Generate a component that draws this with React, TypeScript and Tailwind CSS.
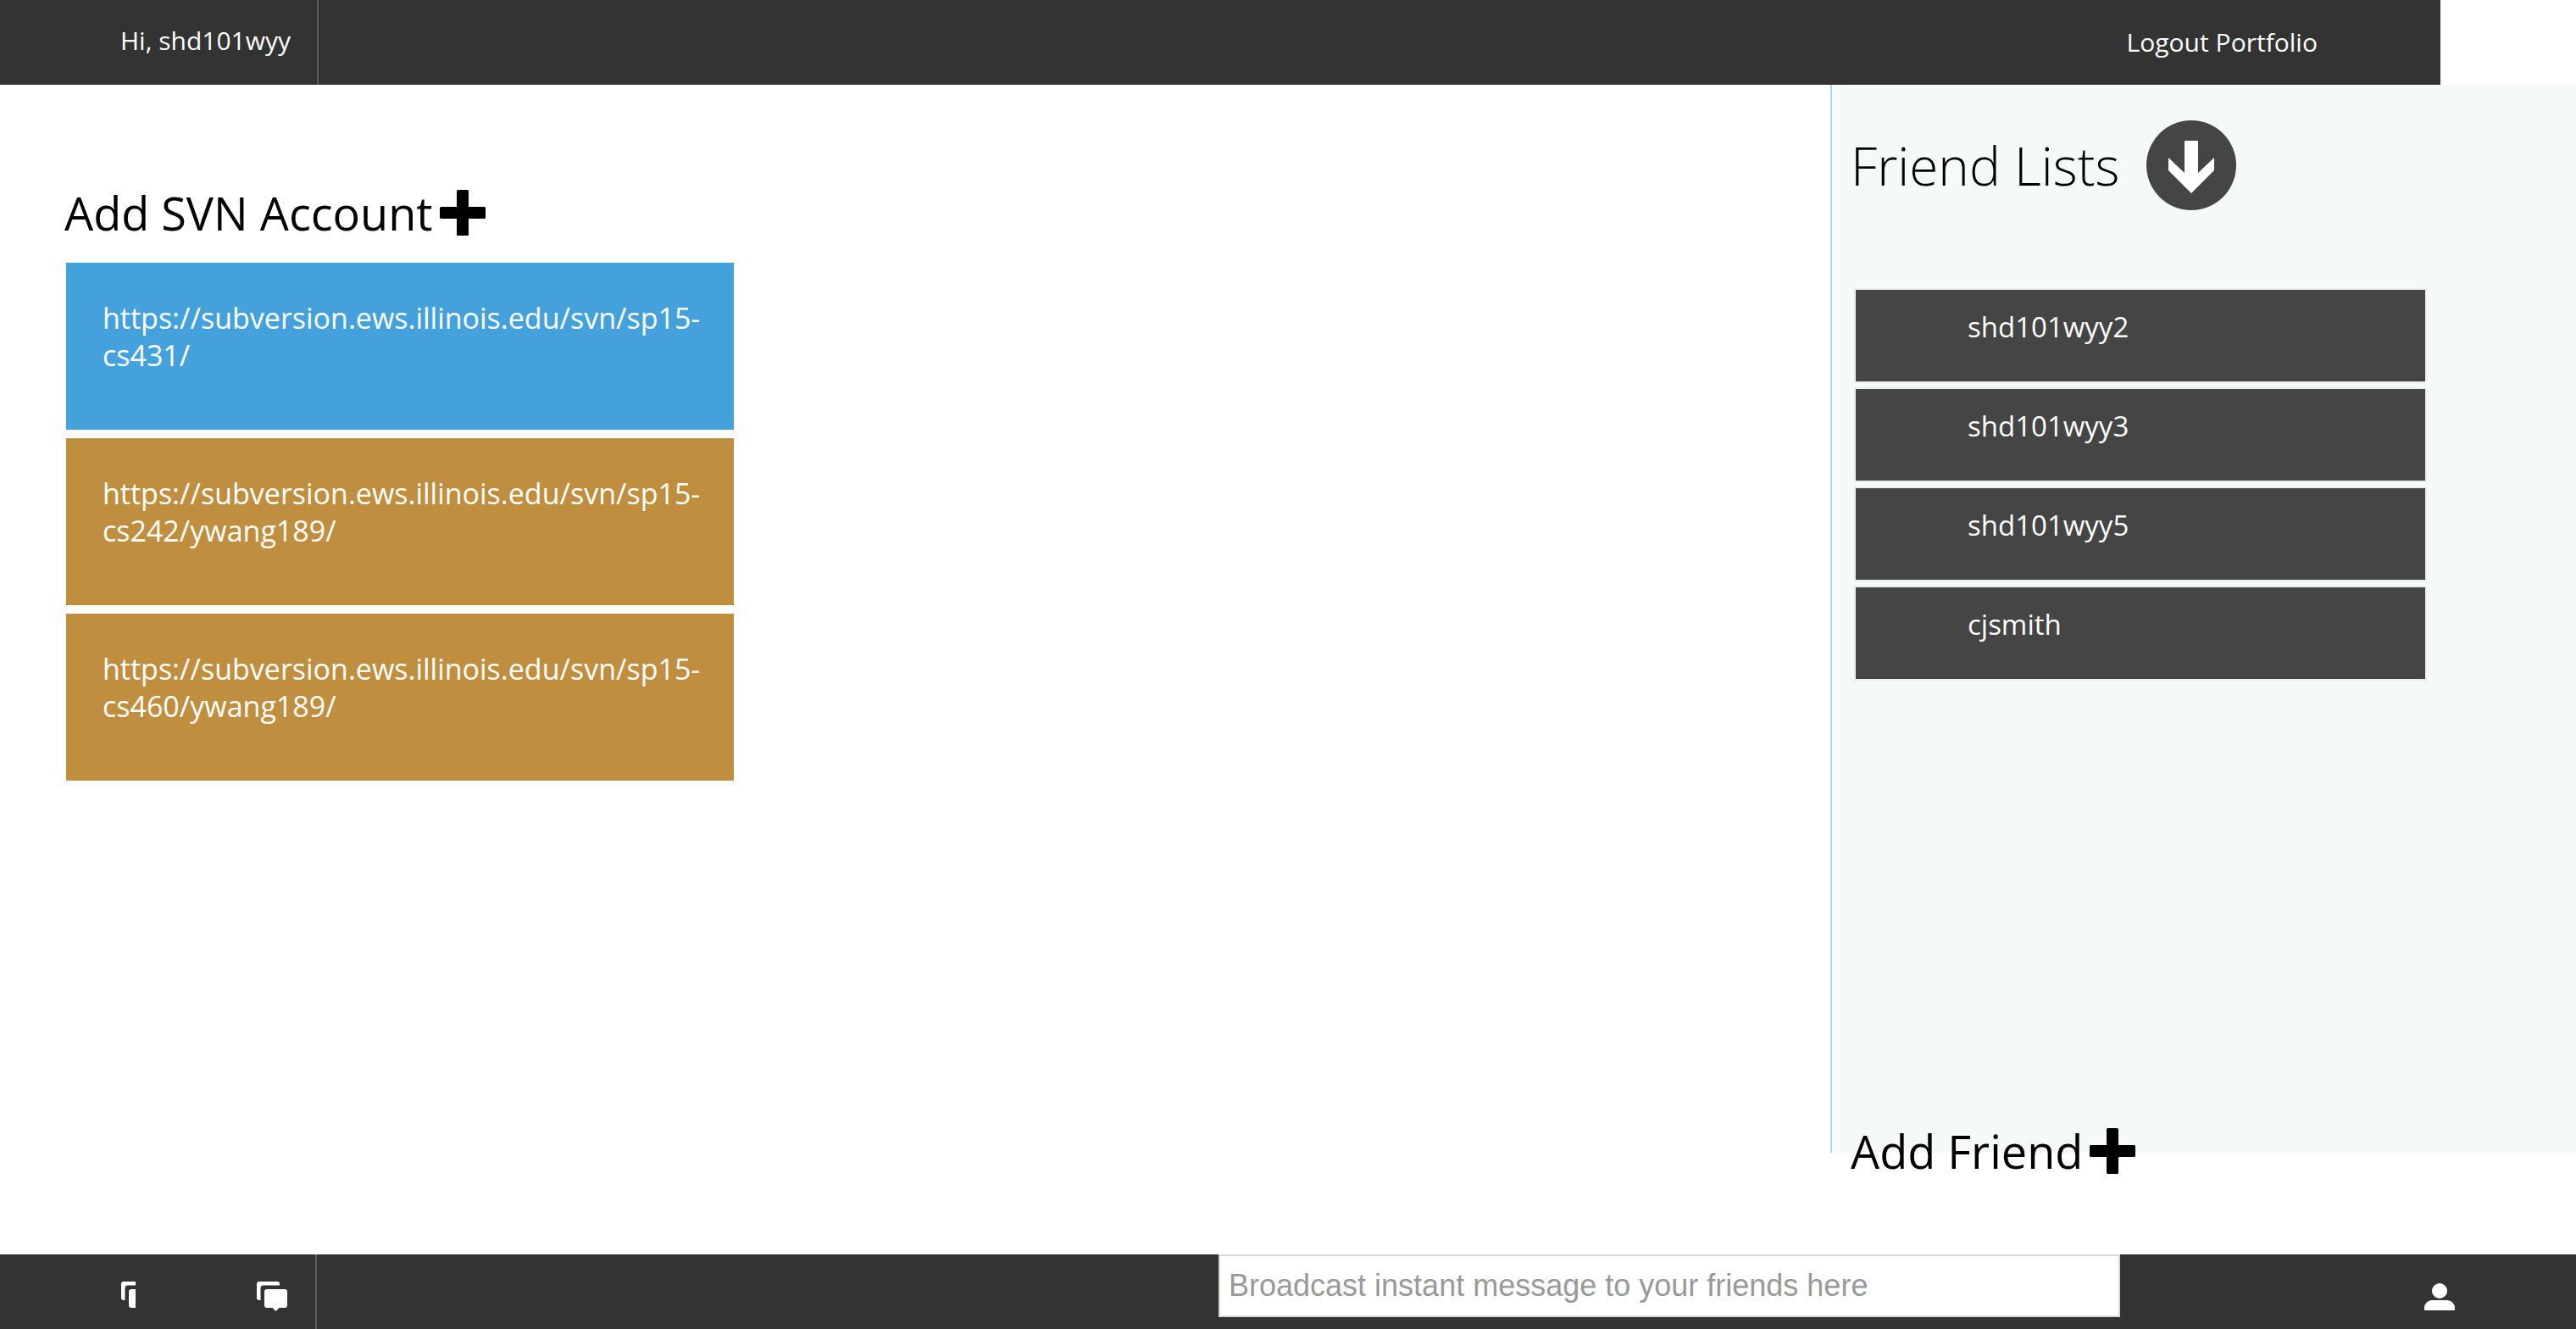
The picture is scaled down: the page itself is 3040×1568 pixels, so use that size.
const accounts = [
  { url: "https://subversion.ews.illinois.edu/svn/sp15-cs431/", tone: "bg-[#45a1dc]" },
  { url: "https://subversion.ews.illinois.edu/svn/sp15-cs242/ywang189/", tone: "bg-[#c08e3f]" },
  { url: "https://subversion.ews.illinois.edu/svn/sp15-cs460/ywang189/", tone: "bg-[#c08e3f]" },
];

const friends = ["shd101wyy2", "shd101wyy3", "shd101wyy5", "cjsmith"];

function PlusIcon() {
  return (
    <svg className="size-[54px]" viewBox="0 0 54 54" fill="currentColor" aria-hidden="true">
      <rect x="20" y="0" width="14" height="54" rx="1.5" />
      <rect x="0" y="20" width="54" height="14" rx="1.5" />
    </svg>
  );
}

function ArrowDownIcon() {
  return (
    <svg className="size-[106px]" viewBox="0 0 106 106" aria-hidden="true">
      <circle cx="53" cy="53" r="53" fill="#454545" />
      <path d="M45 24h16v38l19-18v15L53 86 26 59V44l19 18z" fill="#fff" />
    </svg>
  );
}

function ChatIcon() {
  return (
    <svg className="h-9 w-9" viewBox="0 0 36 36" fill="#fff" aria-hidden="true">
      <path d="M3 0H24a3 3 0 0 1 3 3V4.500H8A3.500 3.500 0 0 0 4.500 8V22H3a3 3 0 0 1-3-3V3a3 3 0 0 1 3-3z" />
      <path d="M12 9H33a3 3 0 0 1 3 3V28a3 3 0 0 1-3 3H26.500L22.500 35 18.500 31H12a3 3 0 0 1-3-3V12a3 3 0 0 1 3-3z" />
    </svg>
  );
}

function PersonIcon() {
  return (
    <svg className="h-8 w-9" viewBox="0 0 36 32" fill="#fff" aria-hidden="true">
      <circle cx="18" cy="9" r="9" />
      <path d="M0 32v-3a9 9 0 0 1 9-9H27a9 9 0 0 1 9 9v3z" />
    </svg>
  );
}

export default function App() {
  return (
    <div className="flex min-h-screen flex-col bg-white font-['Open_Sans',sans-serif] text-black">
      <header className="mr-40 flex h-[100px] items-stretch justify-between bg-[#333333] text-[30px] leading-[44px] text-white">
        <div className="flex w-[376px] items-center border-r-2 border-[#5c5c5c] pb-1 pl-[142px]">
          <span>Hi, shd101wyy</span>
        </div>
        <nav className="flex items-center gap-2 pr-[145px]">
          <a href="#logout">Logout</a>
          <a href="#portfolio">Portfolio</a>
        </nav>
      </header>

      <div className="flex flex-1">
        <main className="flex-1 px-[76px] pt-[113px]">
          <button type="button" className="flex items-center gap-2 text-[54px] leading-[76px]">
            Add SVN Account
            <PlusIcon />
          </button>
          <ul className="mt-[21px] ml-0.5 flex w-[788px] flex-col gap-2.5">
            {accounts.map((a) => (
              <li key={a.url}>
                <button
                  type="button"
                  className={`block h-[197px] w-full pt-[43px] pr-8 pb-[66px] pl-[43px] text-left text-[34px] leading-[44px] text-white ${a.tone}`}
                >
                  {a.url}
                </button>
              </li>
            ))}
          </ul>
        </main>

        <aside className="mb-[120px] flex w-[880px] shrink-0 flex-col border-l-2 border-[#a8dbe6] bg-[#f5f9f8] pr-44 pl-[22px]">
          <div className="mt-[42px] flex items-center gap-8">
            <h2 className="text-[62px] leading-[88px] font-light">Friend Lists</h2>
            <button type="button" aria-label="Collapse friend lists">
              <ArrowDownIcon />
            </button>
          </div>
          <ul className="mt-[92px] ml-1 flex flex-col gap-[5px]">
            {friends.map((name) => (
              <li key={name}>
                <button
                  type="button"
                  className="block h-28 w-full border-2 border-[#ebedec] bg-[#454545] px-[132px] pt-6 pb-11 text-left text-[33px] leading-[40px] text-white"
                >
                  {name}
                </button>
              </li>
            ))}
          </ul>
          <button
            type="button"
            className="mt-auto -mb-9 flex items-center gap-2 self-start text-[54px] leading-[76px]"
          >
            Add Friend
            <PlusIcon />
          </button>
        </aside>
      </div>

      <footer className="flex h-[88px] items-stretch bg-[#333333]">
        <div className="flex w-[374px] items-center justify-between border-r-2 border-[#5c5c5c] pt-3 pr-[33px] pl-[143px]">
          <button type="button" aria-label="Messages" className="w-[17px] overflow-hidden">
            <ChatIcon />
          </button>
          <button type="button" aria-label="Chats">
            <ChatIcon />
          </button>
        </div>
        <div className="flex flex-1 items-start justify-end">
          <input
            type="text"
            aria-label="Broadcast message"
            placeholder="Broadcast instant message to your friends here"
            className="h-[74px] w-[1064px] border-2 border-[#d9d9d9] bg-white px-[10px] font-['Liberation_Sans',sans-serif] text-[36px] text-black placeholder:text-[#999999]"
          />
        </div>
        <div className="flex w-[538px] items-center justify-end pt-3 pr-[143px]">
          <button type="button" aria-label="Profile">
            <PersonIcon />
          </button>
        </div>
      </footer>
    </div>
  );
}
